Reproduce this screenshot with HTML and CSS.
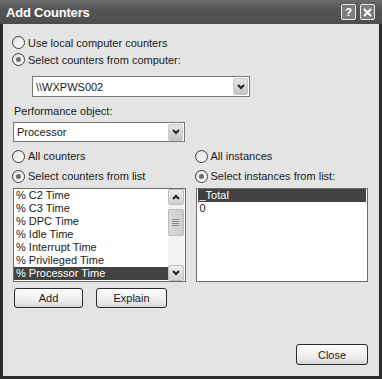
FILE: index.html
```html
<!DOCTYPE html>
<html>
<head>
    <meta charset="UTF-8">
    <title>Add Counters</title>
    <link rel="stylesheet" href="styles.css">
</head>
<body>
    <div class="window">
        <div class="titlebar">
            <span class="title">Add Counters</span>
            <div class="caption-btns">
                <span class="cap-btn">?</span>
                <span class="cap-btn">
                    <svg width="9" height="9" viewBox="0 0 9 9"><path d="M1 1 L8 8 M8 1 L1 8" stroke="#fff" stroke-width="2"/></svg>
                </span>
            </div>
        </div>

        <div class="content">
            <div class="radio-row"><span class="radio"></span>Use local computer counters</div>
            <div class="radio-row"><span class="radio checked"></span>Select counters from computer:</div>

            <div class="combo combo-machine">
                <span class="combo-text">\\WXPWS002</span>
                <span class="drop-btn">
                    <svg width="8" height="6" viewBox="0 0 8 6"><path d="M1 1 L4 4 L7 1" fill="none" stroke="#222" stroke-width="2"/></svg>
                </span>
            </div>

            <div class="field-label">Performance object:</div>
            <div class="combo combo-object">
                <span class="combo-text">Processor</span>
                <span class="drop-btn">
                    <svg width="8" height="6" viewBox="0 0 8 6"><path d="M1 1 L4 4 L7 1" fill="none" stroke="#222" stroke-width="2"/></svg>
                </span>
            </div>

            <div class="columns">
                <div class="col">
                    <div class="radio-row tall"><span class="radio"></span>All counters</div>
                    <div class="radio-row tall"><span class="radio checked"></span>Select counters from list</div>
                    <div class="listbox">
                        <ul class="items">
                            <li>% C2 Time</li>
                            <li>% C3 Time</li>
                            <li>% DPC Time</li>
                            <li>% Idle Time</li>
                            <li>% Interrupt Time</li>
                            <li>% Privileged Time</li>
                            <li class="selected">% Processor Time</li>
                        </ul>
                        <div class="scrollbar">
                            <span class="sb-btn">
                                <svg width="8" height="6" viewBox="0 0 8 6"><path d="M1 5 L4 2 L7 5" fill="none" stroke="#222" stroke-width="2"/></svg>
                            </span>
                            <span class="sb-thumb"><span class="grip"></span></span>
                            <span class="sb-track"></span>
                            <span class="sb-btn">
                                <svg width="8" height="6" viewBox="0 0 8 6"><path d="M1 1 L4 4 L7 1" fill="none" stroke="#222" stroke-width="2"/></svg>
                            </span>
                        </div>
                    </div>
                    <div class="btn-row">
                        <button class="btn btn-add">Add</button>
                        <button class="btn btn-explain">Explain</button>
                    </div>
                </div>

                <div class="col">
                    <div class="radio-row tall"><span class="radio"></span>All instances</div>
                    <div class="radio-row tall"><span class="radio checked"></span>Select instances from list:</div>
                    <div class="listbox">
                        <ul class="items">
                            <li class="selected">_Total</li>
                            <li>0</li>
                        </ul>
                    </div>
                </div>
            </div>

            <div class="footer">
                <button class="btn btn-close">Close</button>
            </div>
        </div>
    </div>
</body>
</html>
```

FILE: styles.css
```css
body, html {
    margin: 0;
    padding: 0;
    background-color: #fff;
    font-family: "Liberation Sans", Arial, sans-serif;
    font-size: 11px;
    color: #1a1a1a;
}
.window {
    width: 382px;
    height: 379px;
    box-sizing: border-box;
    background-color: #2c2c2c;
    display: flex;
    flex-direction: column;
}
.titlebar {
    height: 23px;
    flex-shrink: 0;
    display: flex;
    align-items: center;
    justify-content: space-between;
    padding: 1px 7px 0 6px;
    background: linear-gradient(#6a6a6a, #545454 40%, #4e4e4e);
}
.title {
    color: #fff;
    font-weight: bold;
    font-size: 13px;
    letter-spacing: -0.2px;
}
.caption-btns {
    display: flex;
    gap: 4px;
    margin-top: -1px;
}
.cap-btn {
    width: 13px;
    height: 14px;
    border: 1px solid #e8e8e8;
    border-radius: 2px;
    background-color: #7c7c7c;
    color: #fff;
    font-weight: bold;
    font-size: 11px;
    display: flex;
    align-items: center;
    justify-content: center;
}
.content {
    flex: 1;
    margin: 0 3px 3px 3px;
    background-color: #e4e4e4;
    padding: 10px 11px 11px 9px;
    display: flex;
    flex-direction: column;
}
.radio-row {
    height: 17px;
    display: flex;
    align-items: center;
    gap: 3px;
}
.radio-row.tall { height: 20px; }
.radio {
    width: 13px;
    height: 13px;
    box-sizing: border-box;
    border: 1px solid #3c3c3c;
    border-radius: 50%;
    background: linear-gradient(135deg, #e0e0e0, #fff);
    display: flex;
    align-items: center;
    justify-content: center;
    flex-shrink: 0;
}
.radio.checked::after {
    content: "";
    width: 5px;
    height: 5px;
    border-radius: 50%;
    background-color: #6c6c6c;
}
.combo {
    height: 21px;
    box-sizing: border-box;
    border: 1px solid #777;
    background-color: #fff;
    display: flex;
    align-items: center;
    justify-content: space-between;
    padding: 0 1px 0 3px;
}
.combo-machine { width: 218px; margin: 8px 0 0 20px; }
.combo-object { width: 172px; margin: 4px 0 0 1px; height: 20px; }
.drop-btn {
    width: 15px;
    height: 17px;
    box-sizing: border-box;
    border: 1px solid #c8c8c8;
    border-radius: 2px;
    background: linear-gradient(#e6e6e6, #c4c4c4);
    display: flex;
    align-items: center;
    justify-content: center;
}
.field-label {
    margin: 7px 0 0 2px;
    line-height: 14px;
}
.columns {
    display: flex;
    gap: 10px;
    margin-top: 4px;
    margin-left: 1px;
}
.col {
    width: 174px;
    display: flex;
    flex-direction: column;
}
.col .radio-row { margin-left: -1px; }
.listbox {
    height: 94px;
    box-sizing: border-box;
    margin-top: 2px;
    border: 1px solid #6e6e6e;
    background-color: #fff;
    display: flex;
}
.items {
    list-style: none;
    margin: 0;
    padding: 0;
    flex: 1;
}
.items li {
    line-height: 13px;
    height: 13px;
    padding-left: 2px;
    white-space: nowrap;
}
.items li.selected {
    background-color: #424242;
    color: #fff;
}
.col:last-child .items { padding: 0 1px; }
.scrollbar {
    width: 16px;
    display: flex;
    flex-direction: column;
    background-color: #f3f3f3;
    padding: 0 1px 0 0;
}
.sb-btn {
    height: 16px;
    box-sizing: border-box;
    border: 1px solid #bcbcbc;
    border-radius: 2px;
    background: linear-gradient(#ececec, #cfcfcf);
    display: flex;
    align-items: center;
    justify-content: center;
}
.sb-thumb {
    height: 27px;
    margin-top: 4px;
    box-sizing: border-box;
    border: 1px solid #bcbcbc;
    border-radius: 2px;
    background: linear-gradient(90deg, #dadada, #cdcdcd);
    display: flex;
    align-items: center;
    justify-content: center;
}
.grip {
    width: 7px;
    height: 7px;
    background: repeating-linear-gradient(#8c8c8c 0 1px, transparent 1px 2px);
}
.sb-track { flex: 1; }
.btn-row {
    display: flex;
    gap: 13px;
    margin-top: 6px;
}
.btn {
    height: 20px;
    box-sizing: border-box;
    border: 1px solid #2a2a2a;
    border-radius: 3px;
    background: linear-gradient(#fdfdfd, #eaeaea 70%, #d4d4d4);
    font-family: "Liberation Sans", Arial, sans-serif;
    font-size: 11px;
    color: #1a1a1a;
    padding: 0;
}
.btn-add { width: 69px; margin-left: 1px; }
.btn-explain { width: 71px; }
.footer {
    margin-top: auto;
    display: flex;
    justify-content: flex-end;
}
.btn-close { width: 72px; height: 21px; }
```
